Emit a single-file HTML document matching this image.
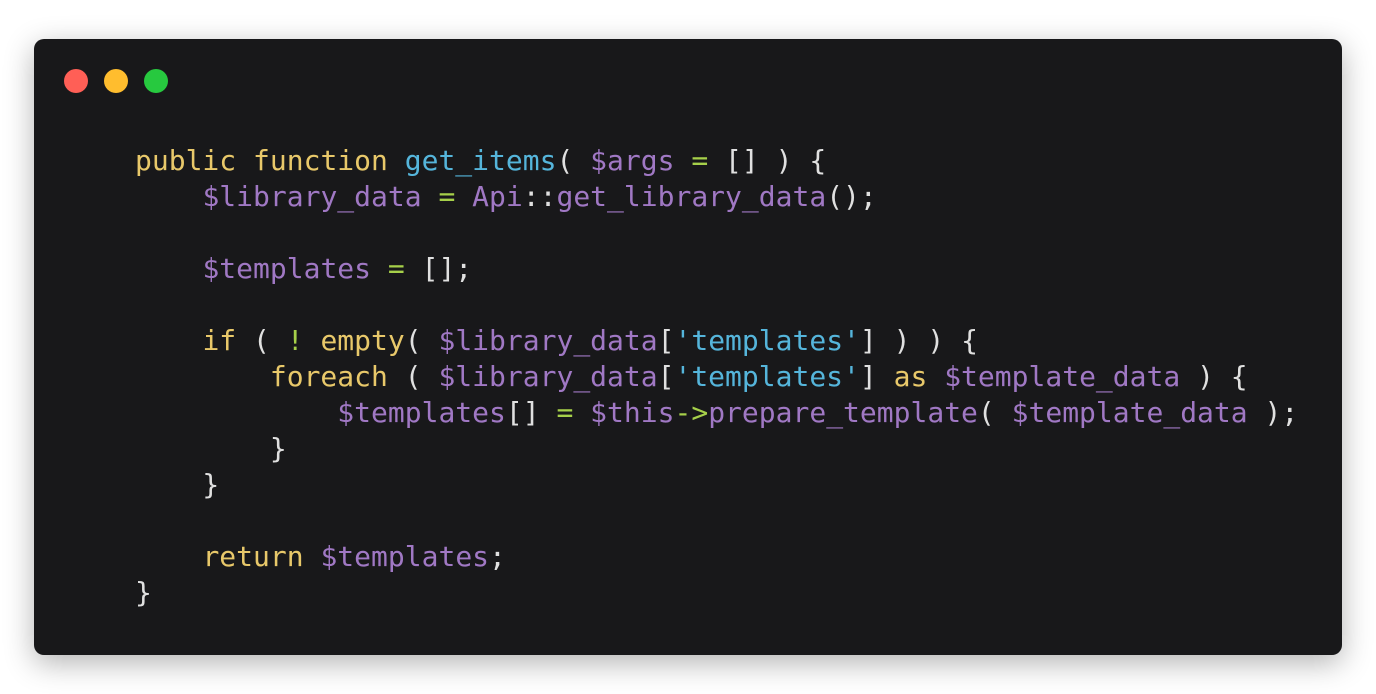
<!DOCTYPE html>
<html><head><style>
html,body{margin:0;padding:0;width:1376px;height:694px;background:#fff;overflow:hidden}
.win{position:absolute;left:34px;top:39px;width:1308px;height:616px;background:#18181a;border-radius:10px;box-shadow:0 8px 30px rgba(0,0,0,.3)}
.d{position:absolute;top:30px;width:24px;height:24px;border-radius:50%}
pre{position:absolute;left:101px;top:104px;margin:0;font-family:"DejaVu Sans Mono","Liberation Mono",monospace;font-size:28px;line-height:36px;color:#e0e0e0}
.k{color:#e8c86a}.f{color:#55b5db}.v{color:#a078c4}.o{color:#a6d04a}.s{color:#55b5db}
</style></head><body>
<div class="win">
<div class="d" style="left:30px;background:#ff5f56"></div>
<div class="d" style="left:70px;background:#ffbd2e"></div>
<div class="d" style="left:110px;background:#27c93f"></div>
<pre><span class="k">public</span> <span class="k">function</span> <span class="f">get_items</span>( <span class="v">$args</span> <span class="o">=</span> [] ) {
    <span class="v">$library_data</span> <span class="o">=</span> <span class="v">Api</span>::<span class="v">get_library_data</span>();

    <span class="v">$templates</span> <span class="o">=</span> [];

    <span class="k">if</span> ( <span class="o">!</span> <span class="k">empty</span>( <span class="v">$library_data</span>[<span class="s">'templates'</span>] ) ) {
        <span class="k">foreach</span> ( <span class="v">$library_data</span>[<span class="s">'templates'</span>] <span class="k">as</span> <span class="v">$template_data</span> ) {
            <span class="v">$templates</span>[] <span class="o">=</span> <span class="v">$this</span><span class="o">-&gt;</span><span class="v">prepare_template</span>( <span class="v">$template_data</span> );
        }
    }

    <span class="k">return</span> <span class="v">$templates</span>;
}</pre>
</div>
</body></html>
